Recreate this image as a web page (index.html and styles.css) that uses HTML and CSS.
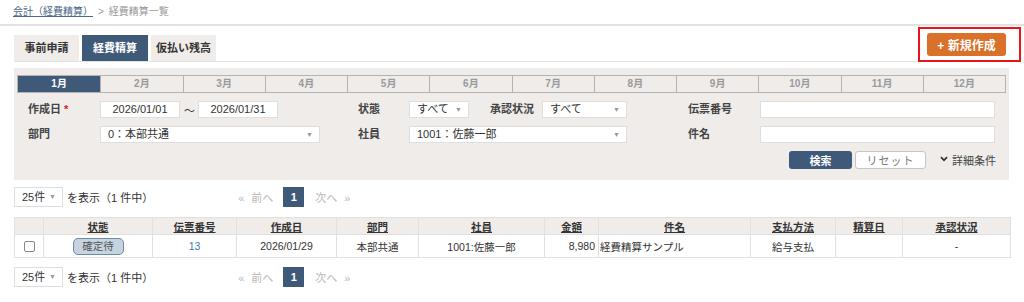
FILE: index.html
```html
<!DOCTYPE html>
<html lang="ja">
<head>
<meta charset="UTF-8">
<title>経費精算一覧</title>
<link rel="stylesheet" href="styles.css">
</head>
<body>

<div class="crumb"><a href="#">会計（経費精算）</a><span class="sep">&gt;</span><span class="here">経費精算一覧</span></div>

<div class="head">
    <div class="tabs">
        <div class="tab">事前申請</div>
        <div class="tab active">経費精算</div>
        <div class="tab">仮払い残高</div>
    </div>
    <div class="mark"><button class="new-btn">+ 新規作成</button></div>
</div>

<div class="panel">
    <div class="months">
        <div class="month active">1月</div>
        <div class="month">2月</div>
        <div class="month">3月</div>
        <div class="month">4月</div>
        <div class="month">5月</div>
        <div class="month">6月</div>
        <div class="month">7月</div>
        <div class="month">8月</div>
        <div class="month">9月</div>
        <div class="month">10月</div>
        <div class="month">11月</div>
        <div class="month">12月</div>
    </div>

    <div class="form">
        <div class="lbl">作成日 <span class="req">*</span></div>
        <div class="field">
            <div class="box date">2026/01/01</div>
            <span class="tilde">〜</span>
            <div class="box date">2026/01/31</div>
        </div>
        <div class="lbl">状態</div>
        <div class="field">
            <div class="box sel w-state">すべて<span class="arr">▼</span></div>
            <div class="lbl inner">承認状況</div>
            <div class="box sel w-appr">すべて<span class="arr">▼</span></div>
        </div>
        <div></div>
        <div class="lbl">伝票番号</div>
        <div class="field"><div class="box full"></div></div>

        <div class="lbl">部門</div>
        <div class="field"><div class="box sel w-dept">0：本部共通<span class="arr">▼</span></div></div>
        <div class="lbl">社員</div>
        <div class="field"><div class="box sel full">1001：佐藤一郎<span class="arr">▼</span></div></div>
        <div></div>
        <div class="lbl">件名</div>
        <div class="field"><div class="box full"></div></div>
    </div>

    <div class="actions">
        <button class="search-btn">検索</button>
        <button class="reset-btn">リセット</button>
        <span class="more">
            <svg class="chev" width="8" height="6" viewBox="0 0 8 6"><path d="M1 1.2 L4 4.3 L7 1.2" fill="none" stroke="#333" stroke-width="1.8"/></svg>
            詳細条件
        </span>
    </div>
</div>

<div class="pager">
    <div class="box per">25件<span class="arr">▼</span></div>
    <span class="count">を表示（1 件中）</span>
    <div class="pages">
        <span class="off"><span class="q">«</span>前へ</span>
        <span class="page">1</span>
        <span class="off">次へ<span class="q">»</span></span>
    </div>
</div>

<table class="list">
    <colgroup>
        <col style="width:29px"><col style="width:109px"><col style="width:84px"><col style="width:100px">
        <col style="width:82px"><col style="width:126px"><col style="width:54px"><col style="width:152px">
        <col style="width:85px"><col style="width:67px"><col style="width:108px">
    </colgroup>
    <tr>
        <th></th><th><u>状態</u></th><th><u>伝票番号</u></th><th><u>作成日</u></th><th><u>部門</u></th>
        <th><u>社員</u></th><th><u>金額</u></th><th><u>件名</u></th><th><u>支払方法</u></th>
        <th><u>精算日</u></th><th><u>承認状況</u></th>
    </tr>
    <tr>
        <td><span class="check"></span></td>
        <td><span class="badge">確定待</span></td>
        <td class="link">13</td>
        <td>2026/01/29</td>
        <td>本部共通</td>
        <td>1001:佐藤一郎</td>
        <td class="num">8,980</td>
        <td class="left">経費精算サンプル</td>
        <td>給与支払</td>
        <td></td>
        <td>-</td>
    </tr>
</table>

<div class="pager bottom">
    <div class="box per">25件<span class="arr">▼</span></div>
    <span class="count">を表示（1 件中）</span>
    <div class="pages">
        <span class="off"><span class="q">«</span>前へ</span>
        <span class="page">1</span>
        <span class="off">次へ<span class="q">»</span></span>
    </div>
</div>

</body>
</html>
```

FILE: styles.css
```css
body {
    margin: 0;
    background: #fff;
    color: #333;
    font-family: "Liberation Sans", "Noto Sans CJK JP", sans-serif;
    font-size: 11px;
    width: 1024px;
    height: 302px;
    overflow: hidden;
}

.crumb {
    height: 24px;
    line-height: 24px;
    padding: 0 13px;
    font-size: 10px;
    border-bottom: 2px solid #e2e2e2;
}
.crumb a { color: #4a6888; }
.crumb .sep { color: #999; margin: 0 5px; }
.crumb .here { color: #999; }

.head {
    display: flex;
    justify-content: space-between;
    align-items: flex-end;
    margin: 1px 14px 0;
    border-bottom: 1px solid #e2e2e2;
    height: 34px;
}
.tabs { display: flex; gap: 3px; }
.tab {
    width: 65px;
    height: 26px;
    line-height: 26px;
    text-align: center;
    background: #efecea;
    color: #333;
    font-weight: bold;
    font-size: 11px;
}
.tab.active { background: #3f5a78; color: #fff; width: 66px; }

.mark {
    align-self: flex-start;
    border: 2px solid #e8141c;
    width: 92px;
    height: 31px;
    margin-right: -11px;
    margin-bottom: -1px;
    display: flex;
    align-items: center;
    padding-left: 7px;
}
.new-btn {
    width: 79px;
    height: 23px;
    border: none;
    border-radius: 3px;
    background: #d9712a;
    color: #fff;
    font-family: inherit;
    font-weight: bold;
    font-size: 12px;
    padding: 0;
}

.panel {
    margin: 6px 15px 0 14px;
    background: #efecea;
    padding: 7px 3px 11px;
    height: 94px;
}
.months {
    display: grid;
    grid-template-columns: repeat(12, 1fr);
    border: 1px solid #b5b2b0;
    height: 16px;
}
.month {
    border-left: 1px solid #b5b2b0;
    text-align: center;
    line-height: 16px;
    color: #9a9a9a;
    font-weight: bold;
    font-size: 10px;
}
.month:first-child { border-left: none; }
.month.active { background: #3f5a78; color: #fff; }

.form {
    display: grid;
    grid-template-columns: 72px 258px 51px 218px 61px 72px 235px;
    row-gap: 8px;
    margin: 8px 0 0 11px;
}
.lbl {
    font-size: 11px;
    font-weight: bold;
    color: #444;
    line-height: 17px;
    white-space: nowrap;
}
.lbl.inner { margin: 0 8px 0 21px; }
.req { color: #d92020; }
.field { display: flex; align-items: center; }
.box {
    background: #fff;
    border: 1px solid #e0dedc;
    height: 15px;
    line-height: 15px;
    padding: 0 7px;
    font-size: 11px;
    color: #333;
    position: relative;
    white-space: nowrap;
}
.date { width: 64px; text-align: center; }
.tilde { margin: 0 3px 0 4px; font-size: 11px; }
.sel { padding-right: 16px; }
.arr {
    position: absolute;
    right: 6px;
    top: 0;
    font-size: 7px;
    color: #999;
}
.w-state { width: 35px; }
.w-appr { width: 60px; }
.w-dept { width: 195px; }
.full { flex: 1; }

.actions {
    display: flex;
    justify-content: flex-end;
    align-items: center;
    margin-top: 8px;
    padding-right: 10px;
}
.search-btn, .reset-btn {
    height: 18px;
    border-radius: 3px;
    font-family: inherit;
    font-size: 11px;
    padding: 0;
}
.search-btn {
    width: 63px;
    background: #3f5a78;
    color: #fff;
    border: none;
    font-weight: bold;
    margin-right: 3px;
}
.reset-btn {
    width: 71px;
    background: #fff;
    color: #777;
    border: 1px solid #c8c6c4;
    letter-spacing: 1px;
}
.more { margin-left: 14px; color: #444; font-size: 11px; display: flex; align-items: center; gap: 4px; }
.chev { margin-top: -3px; }

.pager {
    display: flex;
    align-items: center;
    margin: 7px 14px 0;
    height: 20px;
}
.pager.bottom { margin-top: 9px; }
.per {
    width: 27px;
    height: 18px;
    line-height: 18px;
    border-color: #ddd;
    padding-right: 13px;
}
.count { margin-left: 4px; font-size: 11px; }
.pages {
    display: flex;
    align-items: center;
    margin-left: 78px;
}
.off { color: #b8b8b8; font-size: 11px; }
.q { margin: 0 7px; }
.page {
    background: #3f5a78;
    color: #fff;
    font-weight: bold;
    width: 21px;
    height: 20px;
    line-height: 20px;
    text-align: center;
    margin: 0 11px 0 10px;
}

.list {
    margin: 10px 0 0 14px;
    width: 996px;
    border-collapse: collapse;
    table-layout: fixed;
    font-size: 10.5px;
}
.list th, .list td {
    border: 1px solid #e3e1df;
    text-align: center;
    padding: 0 4px;
    white-space: nowrap;
}
.list th {
    background: #efecea;
    height: 16px;
    font-weight: bold;
    color: #333;
}
.list td { height: 22px; color: #333; }
.list .link { color: #3a7ab8; }
.list .num { text-align: right; padding-right: 3px; }
.list .left { text-align: left; padding-left: 1px; }
.check {
    display: inline-block;
    width: 9px;
    height: 9px;
    border: 1px solid #888;
    border-radius: 2px;
    vertical-align: middle;
}
.badge {
    display: inline-block;
    width: 49px;
    height: 15px;
    line-height: 15px;
    background: #c6d4e2;
    border: 1px solid #6f8aa6;
    border-radius: 5px;
    color: #555;
}
```
